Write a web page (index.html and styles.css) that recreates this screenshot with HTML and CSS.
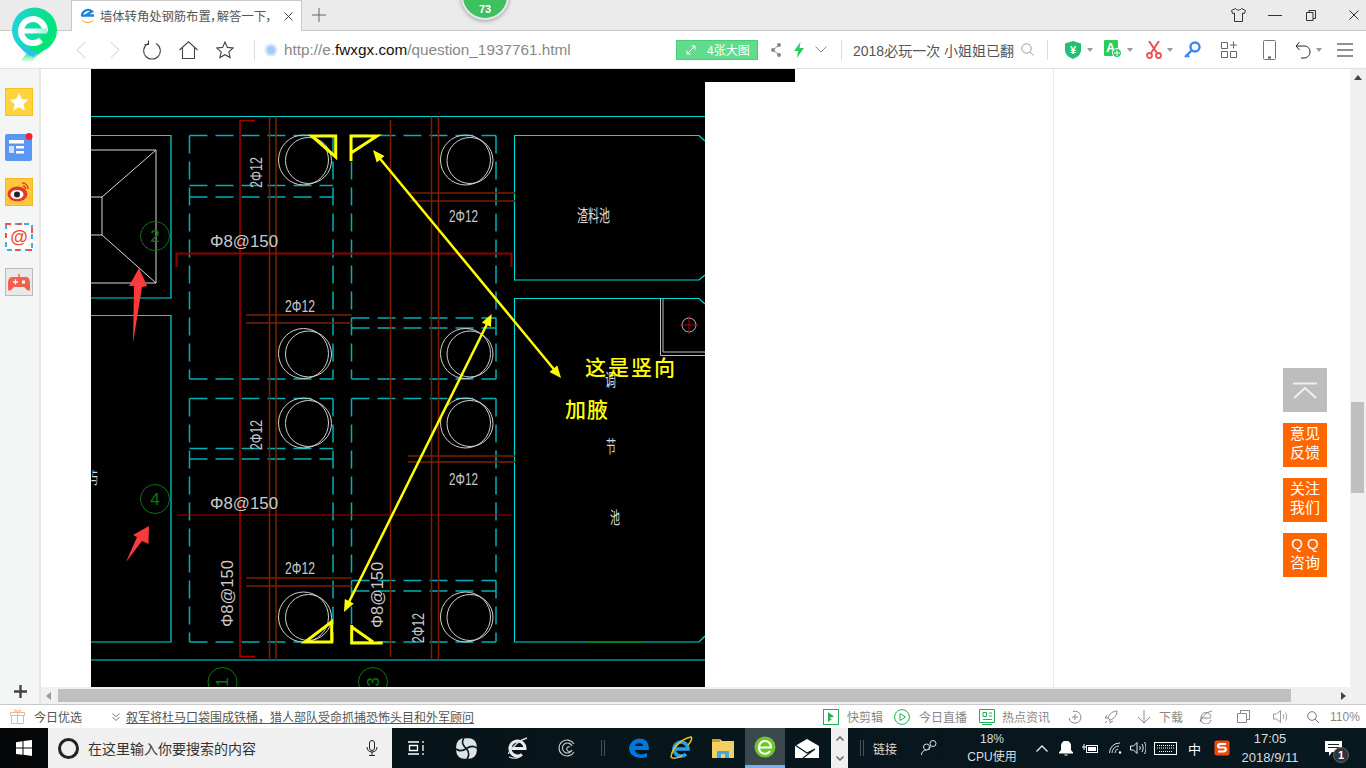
FILE: index.html
```html
<!DOCTYPE html>
<html lang="zh">
<head>
<meta charset="utf-8">
<title>墙体转角处钢筋布置，解答一下</title>
<link rel="stylesheet" href="styles.css">
</head>
<body>
<div class="screen">
  <header class="tabbar">
    <div class="tab">
      <svg width="16" height="16" viewBox="0 0 16 16"><path d="M2 8a6 6 0 0 1 10-4.500L5 7.500h9" fill="none" stroke="#1c86d8" stroke-width="2.400"/><path d="M1 10c3 5 9 5 13 1-2 5-11 6-13-1z" fill="#f0a020"/></svg>
      <span class="tab-title">墙体转角处钢筋布置，解答一下，</span>
      <svg class="ml-9" width="9" height="9" viewBox="0 0 9 9"><path d="M0.500 0.500l8 8M8.500 0.500l-8 8" stroke="#444" fill="none"/></svg>
    </div>
    <svg class="ml-10" width="14" height="14" viewBox="0 0 14 14"><path d="M7 0v14M0 7h14" stroke="#666" fill="none"/></svg>
    <div class="winctl">
      <svg width="15" height="14" viewBox="0 0 15 14"><path d="M4.500 .5L.5 2.500l1 3 2-.5v8.500h8V5l2 .5 1-3-4-2c-1 2-5 2-6 0z" fill="none" stroke="#333"/></svg>
      <svg class="ml-22" width="14" height="14" viewBox="0 0 14 14"><path d="M0 7.500h14" stroke="#333" fill="none"/></svg>
      <svg class="ml-24" width="10" height="11" viewBox="0 0 10 11"><path d="M.5 2.500h6.500v8H.5zM3 2.500V.5h6.500v8H7" stroke="#333" fill="none"/></svg>
      <svg class="ml-33" width="10" height="10" viewBox="0 0 10 10"><path d="M.5 .5l9 9M9.500 .5l-9 9" stroke="#333" fill="none"/></svg>
    </div>
  </header>

  <nav class="toolbar">
    <svg width="10" height="18" viewBox="0 0 10 18"><path d="M9.500 1L1 9l8.500 8" stroke="#ccc" fill="none"/></svg>
    <svg class="ml-24" width="10" height="18" viewBox="0 0 10 18"><path d="M.5 1L9 9l-8.500 8" stroke="#ccc" fill="none"/></svg>
    <svg class="ml-23" width="18" height="20" viewBox="0 0 18 20"><path d="M5 3.500a8.300 8.300 0 1 0 8 0M5.500 .5v4h-4" stroke="#444" stroke-width="1.100" fill="none"/></svg>
    <svg class="ml-18" width="19" height="18" viewBox="0 0 19 18"><path d="M.5 9L9.500 .8 18.500 9M3.500 7v10.500h12V7" stroke="#444" stroke-width="1.100" fill="none"/></svg>
    <svg class="ml-18" width="18" height="18" viewBox="0 0 18 18"><path d="M9 1l2.400 5.400 5.800.6-4.400 3.900 1.300 5.700L9 13.700l-5.100 2.900 1.300-5.700L.8 7l5.800-.6z" stroke="#444" stroke-width="1.100" fill="none"/></svg>
    <i class="sep ml-20"></i>
    <svg class="ml-9" width="14" height="14" viewBox="0 0 14 14"><circle cx="7" cy="7" r="6.500" fill="#d5e5fb"/><circle cx="7" cy="7" r="4" fill="#a8c8f8"/></svg>
    <div class="url ml-6">http://e.<b>fwxgx.com</b>/question_1937761.html</div>
    <div class="bigimg">
      <svg width="10" height="10" viewBox="0 0 10 10"><path d="M1 9l8-8M5.500 1H9v3.500M1 5.500V9h3.500" stroke="#fff" fill="none"/></svg>
      <span>4张大图</span>
    </div>
    <svg class="ml-13" width="10" height="14" viewBox="0 0 10 14"><path d="M8 2L2 7l6 5" stroke="#888" fill="none"/><circle cx="8" cy="2" r="2" fill="#888"/><circle cx="2" cy="7" r="2" fill="#888"/><circle cx="8" cy="12" r="2" fill="#888"/></svg>
    <svg class="ml-13" width="10" height="16" viewBox="0 0 10 16"><path d="M6.500 0L0 9h4l-1 7 7-10H5.500z" fill="#2ecc60"/></svg>
    <svg class="ml-11" width="12" height="7" viewBox="0 0 12 7"><path d="M.5 .5L6 6l5.500-5.500" stroke="#888" fill="none"/></svg>
    <i class="sep ml-14"></i>
    <div class="newsbox ml-11">2018必玩一次 小姐姐已翻</div>
    <svg class="ml-5" width="13" height="13" viewBox="0 0 13 13"><circle cx="5.500" cy="5.500" r="4.700" stroke="#999" fill="none"/><path d="M9 9l3.500 3.500" stroke="#999" fill="none"/></svg>
    <i class="sep ml-13"></i>
    <svg class="ml-17" width="16" height="18" viewBox="0 0 16 18"><path d="M8 0l8 2.500V9c0 4.500-4 7.500-8 9-4-1.500-8-4.500-8-9V2.500z" fill="#22c070"/><text x="8" y="12.500" class="ico-yen">¥</text></svg>
    <i class="caret ml-6"></i>
    <svg class="ml-11" width="18" height="19" viewBox="0 0 18 19"><rect width="14" height="16" rx="1" fill="#2ecc60"/><text x="6.500" y="12" class="ico-a">A</text><circle cx="13" cy="13" r="4.500" fill="#2ecc60" stroke="#fff"/><path d="M13 10v6M10 13h6" stroke="#fff" fill="none"/></svg>
    <i class="caret ml-5"></i>
    <svg class="ml-13" width="16" height="18" viewBox="0 0 16 18"><path d="M3 0l8 12M13 0L5 12" stroke="#f05050" stroke-width="2" fill="none"/><circle cx="3.500" cy="14.500" r="2.500" stroke="#f05050" stroke-width="1.800" fill="none"/><circle cx="12.500" cy="14.500" r="2.500" stroke="#f05050" stroke-width="1.800" fill="none"/></svg>
    <i class="caret ml-5"></i>
    <svg class="ml-11" width="17" height="17" viewBox="0 0 17 17"><circle cx="11" cy="6" r="4.500" stroke="#3d85f0" stroke-width="2.400" fill="none"/><path d="M7.500 9.500L1 16M3 14l2 2" stroke="#3d85f0" stroke-width="2.400" fill="none"/></svg>
    <svg class="ml-20" width="16" height="17" viewBox="0 0 16 17"><path d="M.5 1.500h6v6h-6zM.5 10.500h6v6h-6zM9.500 10.500h6v6h-6zM12.500 .5v7M9 4h7" stroke="#666" fill="none"/></svg>
    <svg class="ml-26" width="13" height="20" viewBox="0 0 13 20"><rect x=".5" y=".5" width="12" height="19" rx="1" stroke="#777" fill="none"/><rect x="5" y="16.500" width="3" height="2" fill="#555"/></svg>
    <svg class="ml-19" width="16" height="18" viewBox="0 0 16 18"><path d="M4.500 1L1 5l3.500 4M1 5h8c4 0 6 2.500 6 6s-3 6-6 6H6" stroke="#222" fill="none"/></svg>
    <i class="caret ml-5"></i>
    <svg class="ml-15" width="16" height="14" viewBox="0 0 16 14"><path d="M0 1h16M0 7h16M0 13h16" stroke="#222" stroke-width="1.200" fill="none"/></svg>
  </nav>

  <div class="middle">
    <aside class="sidebar">
      <ul class="side-list">
        <li><svg width="28" height="28" viewBox="0 0 28 28"><rect x=".5" y=".5" width="27" height="27" fill="#ffd43c" stroke="#f5c020"/><path d="M14 5l2.800 6 6.500.7-4.800 4.400 1.300 6.400-5.800-3.200-5.800 3.200 1.300-6.400-4.800-4.400 6.500-.7z" fill="#fff"/></svg></li>
        <li><svg width="28" height="28" viewBox="0 0 28 28"><rect y="1" width="27" height="27" rx="2" fill="#5a96f4"/><rect x="4" y="7" width="15" height="3.500" fill="#fff"/><rect x="4" y="13" width="5" height="7" fill="#cfe0fb"/><rect x="11" y="13" width="8" height="2.500" fill="#fff"/><rect x="11" y="18" width="8" height="2.500" fill="#fff"/><circle cx="24" cy="3.500" r="3.500" fill="#f8222a"/></svg></li>
        <li><svg width="28" height="28" viewBox="0 0 28 28"><rect x=".5" y=".5" width="27" height="27" fill="#ffc83c" stroke="#f5b820"/><ellipse cx="12.500" cy="16" rx="10" ry="7.500" fill="#e8382c"/><ellipse cx="12" cy="16.500" rx="6.500" ry="4.500" fill="#fff"/><circle cx="12" cy="16.500" r="3" fill="#222"/><path d="M17 5c4 0 6 3 6 6M18 8c2 0 2.500 1.500 2.500 3" stroke="#e8382c" stroke-width="1.500" fill="none"/></svg></li>
        <li><svg width="28" height="28" viewBox="0 0 28 28"><rect x="1" y="1" width="26" height="26" fill="#fff" stroke="#4aa8f0" stroke-width="2" stroke-dasharray="5 4"/><path d="M1 1h5M12 1h5M1 10v5M27 5v5M22 27h5M10 27h5" stroke="#f0503c" stroke-width="2" fill="none"/><text x="14" y="20" class="ico-at">@</text></svg></li>
        <li><svg width="28" height="28" viewBox="0 0 28 28"><rect x=".5" y=".5" width="27" height="27" fill="#e8e8e8" stroke="#bbb"/><path d="M7 9h14c3 0 4 3 4 7v5c0 2-2 2-3 1l-3-3H9l-3 3c-1 1-3 1-3-1v-5c0-4 1-7 4-7z" fill="#f4604e"/><path d="M14 6v3" stroke="#f4604e" stroke-width="1.500"/><path d="M8 14h5M10.500 11.500v5" stroke="#fff" stroke-width="1.300"/><rect x="17" y="12.500" width="3" height="3" fill="#fff"/></svg></li>
      </ul>
      <svg class="side-plus" width="13" height="13" viewBox="0 0 13 13"><path d="M6.500 0v13M0 6.500h13" stroke="#444" stroke-width="2.400" fill="none"/></svg>
    </aside>

    <div class="viewport">
      <div class="view-row">
        <main class="page">
          <svg class="drawing" width="704" height="618" viewBox="91 69 704 618">
            <polygon class="bg" points="91,69 795,69 795,82 705,82 705,687 91,687"/>
            <!-- frame -->
            <path class="cy" d="M91 116.500H705M91 660H705"/>
            <path class="cy" d="M91 135.500H171V298H91M91 315.500H171V642H91"/>
            <path class="cy" d="M705 141L699 135.500H514.500V280H699L705 275"/>
            <path class="cy" d="M705 304L699 298.500H514.500V642H699L705 636"/>
            <path class="gn-l" d="M587 642H644"/>
            <!-- white pit -->
            <path class="wh" d="M91 150H156V283H91M91 197H102V235H91M102 197L156 150M102 235L156 283"/>
            <path class="wh2" d="M660.500 298.500V355.500H705M663 298.500V352H705"/>
            <circle class="wh2" cx="689" cy="325" r="7"/>
            <path class="rd" d="M680 325H698M689 316V334"/>
            <!-- dashed stirrups -->
            <path class="dash" d="M189.500 135.500H333M189.500 135.500V379M333 135.500V379M189.500 185.500H333M189.500 197H333M189.500 379H333"/>
            <path class="dash" d="M351.500 135.500H496M351.500 135.500V379M496 135.500V379M351.500 318H496M351.500 328H496M351.500 379H496"/>
            <path class="dash" d="M189.500 398.500H333M189.500 398.500V642M333 398.500V642M189.500 448.500H333M189.500 459H333M189.500 642H333"/>
            <path class="dash" d="M351.500 398.500H496M351.500 398.500V642M496 398.500V642M351.500 580.500H496M351.500 591H496M351.500 642H496"/>
            <!-- rebar -->
            <path class="rd" d="M177 515H511"/>
            <path class="rd-m" d="M255 120.500H240V656.500H255"/>
            <path class="rd-b" d="M176.500 267V253.500H511.500V267"/>
            <path class="br" d="M269.500 116.500V660M276 116.500V660M390.500 120V657M431.500 116.500V660M438.500 116.500V660"/>
            <path class="br" d="M246 315H352M246 323H352M410 193H515M410 201H515M408 456H515M408 462H515M246 578H352M246 586H352"/>
            <!-- piles -->
            <g class="pile">
              <circle cx="303.500" cy="160" r="25"/><circle cx="308.500" cy="160.500" r="23"/>
              <circle cx="465.500" cy="160" r="25"/><circle cx="470" cy="160.500" r="23"/>
              <circle cx="303.500" cy="353.500" r="25"/><circle cx="308.500" cy="354" r="23"/>
              <circle cx="465.500" cy="353.500" r="25"/><circle cx="470" cy="354" r="23"/>
              <circle cx="303.500" cy="423" r="25"/><circle cx="308.500" cy="423.500" r="23"/>
              <circle cx="465.500" cy="423" r="25"/><circle cx="470" cy="423.500" r="23"/>
              <circle cx="303.500" cy="617" r="25"/><circle cx="308.500" cy="617.500" r="23"/>
              <circle cx="465.500" cy="617" r="25"/><circle cx="470" cy="617.500" r="23"/>
            </g>
            <!-- axis bubbles -->
            <g class="axis">
              <circle cx="155" cy="236" r="14.500"/><circle cx="155" cy="499" r="14.500"/>
              <circle cx="222.500" cy="682" r="14.500"/><circle cx="373" cy="682" r="14.500"/>
            </g>
            <text class="axis-t" x="155" y="242">2</text>
            <text class="axis-t" x="155" y="505">4</text>
            <text class="axis-t" transform="translate(228 682) rotate(-90)">1</text>
            <text class="axis-t" transform="translate(379 682) rotate(-90)">3</text>
            <!-- labels -->
            <text class="cad" x="210" y="247" textLength="68" lengthAdjust="spacingAndGlyphs">Φ8@150</text>
            <text class="cad" x="210" y="509" textLength="68" lengthAdjust="spacingAndGlyphs">Φ8@150</text>
            <text class="cad" x="285" y="312" textLength="30" lengthAdjust="spacingAndGlyphs">2Φ12</text>
            <text class="cad" x="449" y="222" textLength="29" lengthAdjust="spacingAndGlyphs">2Φ12</text>
            <text class="cad" x="449" y="485" textLength="29" lengthAdjust="spacingAndGlyphs">2Φ12</text>
            <text class="cad" x="285" y="574" textLength="30" lengthAdjust="spacingAndGlyphs">2Φ12</text>
            <text class="cad" transform="translate(262 188) rotate(-90)" textLength="31" lengthAdjust="spacingAndGlyphs">2Φ12</text>
            <text class="cad" transform="translate(262 450) rotate(-90)" textLength="30" lengthAdjust="spacingAndGlyphs">2Φ12</text>
            <text class="cad" transform="translate(424 643) rotate(-90)" textLength="30" lengthAdjust="spacingAndGlyphs">2Φ12</text>
            <text class="cad" transform="translate(233 627) rotate(-90)" textLength="67" lengthAdjust="spacingAndGlyphs">Φ8@150</text>
            <text class="cad" transform="translate(383 628) rotate(-90)" textLength="66" lengthAdjust="spacingAndGlyphs">Φ8@150</text>
            <text class="cad-cn" x="577" y="222" textLength="33" lengthAdjust="spacingAndGlyphs">渣料池</text>
            <text class="cad-cn" x="605" y="386" textLength="11" lengthAdjust="spacingAndGlyphs">调</text>
            <text class="cad-cn" x="606" y="453" textLength="10" lengthAdjust="spacingAndGlyphs">节</text>
            <text class="cad-cn" x="610" y="524" textLength="10" lengthAdjust="spacingAndGlyphs">池</text>
            <text class="cad-cn" x="91" y="484" textLength="7" lengthAdjust="spacingAndGlyphs">与</text>
            <!-- red annotation arrows -->
            <polygon class="r-arrow" points="139,268 147,286 142,287 133,343 134,286 129,286"/>
            <polygon class="r-arrow" points="149,526 148.500,544 142,541 126,562 137,537 133,535"/>
            <!-- yellow annotation -->
            <path class="yl" d="M311.700 136H335.700V157ZM351 161V136H377L351 153M305 642H331.700V621.700ZM351.700 625V643H382.700M351.700 627L373 642"/>
            <path class="yl-t" d="M377 155L557 373M489 320L347 606"/>
            <polygon class="yl-f" points="373,150 384.500,156.100 376.700,162.500"/>
            <polygon class="yl-f" points="561,378 557.300,365.500 549.500,371.900"/>
            <polygon class="yl-f" points="491.700,314 490.900,327 481.900,322.600"/>
            <polygon class="yl-f" points="344,612 353.800,603.400 344.800,599"/>
            <text class="note" x="585" y="375" textLength="90">这是竖向</text>
            <text class="note" x="565" y="417" textLength="43">加腋</text>
          </svg>
          <div class="page-right"></div>
          <div class="floats">
            <a class="float float-top"><svg width="24" height="17" viewBox="0 0 24 17"><path d="M0 1.500h24M1 16L12 6l11 10" stroke="#f0f0f0" stroke-width="2" fill="none"/></svg></a>
            <a class="float">意见<br>反馈</a>
            <a class="float">关注<br>我们</a>
            <a class="float">Q Q<br>咨询</a>
          </div>
        </main>
        <div class="vscroll">
          <i class="arrow-up"></i>
          <div class="vthumb"></div>
        </div>
      </div>
      <div class="hscroll">
        <i class="arrow-left"></i>
        <div class="hthumb"></div>
        <i class="arrow-right"></i>
      </div>
    </div>
  </div>

  <footer class="statusbar">
    <svg class="ml-10" width="15" height="15" viewBox="0 0 15 15"><path d="M.5 3.500h14v3H.5zM1.500 6.500h12v8h-12zM7.500 3.500v11M7.500 3.500C5 3.500 3 1 5 .8 6.500.6 7.500 3.500 7.500 3.500s1-2.900 2.500-2.700c2 .2 0 2.700-2.500 2.700" stroke="#f8b090" fill="none"/></svg>
    <span class="st st-d ml-9 w48">今日优选</span>
    <svg class="ml-30" width="8" height="8" viewBox="0 0 8 8"><path d="M.5 .5L4 3.500 7.500 .5M.5 4L4 7.500 7.500 4" stroke="#777" fill="none"/></svg>
    <a class="st-link ml-6">叙军将杜马口袋围成铁桶，猎人部队受命抓捕恐怖头目和外军顾问</a>
    <svg class="ml-349" width="16" height="16" viewBox="0 0 16 16"><rect x=".5" y=".5" width="15" height="15" stroke="#20b050" fill="none"/><path d="M5 3l6 4.500L6 9l3 1-4 3z" fill="#20b050"/></svg>
    <span class="st ml-8">快剪辑</span>
    <svg class="ml-11" width="16" height="16" viewBox="0 0 16 16"><circle cx="8" cy="8" r="7.400" stroke="#20b050" fill="none"/><path d="M6 4.500l5.500 3.500L6 11.500z" stroke="#20b050" fill="none"/></svg>
    <span class="st ml-9">今日直播</span>
    <svg class="ml-12" width="16" height="16" viewBox="0 0 16 16"><path d="M.5 .5h15v13H.5zM3 15.500h10M4 3.500v4h3.500v-4zM10 4h3M10 7h3M4 10.500h9" stroke="#20b050" fill="none"/></svg>
    <span class="st ml-7">热点资讯</span>
    <svg class="ml-18" width="14" height="14" viewBox="0 0 14 14"><path d="M1 8A6 6 0 1 0 5 1.500M7 4v6M4 7h6" stroke="#888" fill="none"/></svg>
    <svg class="ml-22" width="14" height="14" viewBox="0 0 14 14"><path d="M13 1C9 1 5 4 4 8l2 2c4-1 7-5 7-9zM4 8L1 8l2-3M6 10v3l3-2M3 11l-2 2" stroke="#888" fill="none"/></svg>
    <svg class="ml-19" width="14" height="14" viewBox="0 0 14 14"><path d="M7 0v13M1 7l6 6 6-6" stroke="#888" fill="none"/></svg>
    <span class="st ml-8">下载</span>
    <svg class="ml-16" width="14" height="14" viewBox="0 0 14 14"><path d="M12 8H2M2 8a5 5 0 0 1 10-1M12 10a5 5 0 0 1-10-2M1 12C3 6 8 2 13 1" stroke="#888" fill="none"/></svg>
    <svg class="ml-24" width="13" height="13" viewBox="0 0 13 13"><path d="M.5 3.500h9v9h-9zM3.500 3.500v-3h9v9h-3" stroke="#888" fill="none"/></svg>
    <svg class="ml-23" width="15" height="13" viewBox="0 0 15 13"><path d="M.5 4h3l4-3.500v12l-4-3.500h-3zM10 4c1 1 1 4 0 5M12.500 2.500c1.500 2 1.500 6 0 8" stroke="#999" fill="none"/></svg>
    <svg class="ml-19" width="12" height="12" viewBox="0 0 12 12"><circle cx="5" cy="5" r="4.300" stroke="#777" fill="none"/><path d="M8 8l4 4" stroke="#777" fill="none"/></svg>
    <span class="st ml-11">110%</span>
  </footer>

  <div class="taskbar">
    <svg class="ml-16" width="16" height="16" viewBox="0 0 16 16"><path d="M0 2.200L6.500 1.300v6.300H0zM7.500 1.100L16 0v7.600H7.500zM0 8.500h6.500v6.300L0 13.900zM7.500 8.500H16V16l-8.500-1.200z" fill="#fff"/></svg>
    <div class="searchbox ml-16">
      <i class="cortana"></i>
      <span class="searchtext">在这里输入你要搜索的内容</span>
      <svg width="12" height="16" viewBox="0 0 12 16"><rect x="3.500" y=".5" width="5" height="10" rx="2.500" stroke="#222" fill="none"/><path d="M1 7c0 3 2 5 5 5s5-2 5-5M6 12v3.500M3 15.500h6" stroke="#222" fill="none"/></svg>
    </div>
    <svg class="ml-16" width="16" height="14" viewBox="0 0 16 14"><path d="M0 1h11M0 13h11M1.500 4.500h8v5h-8zM15 0v2M15 4v6M15 12v2" stroke="#fff" stroke-width="1.300" fill="none"/></svg>
    <svg class="ml-32" width="21" height="21" viewBox="0 0 21 21"><rect x=".2" y=".2" width="20.600" height="20.600" rx="8" fill="#dfe3e6"/><path d="M10.500 10.500C7 8 5 4 8 0M10.500 10.500C14 8 17 7 21 10M10.500 10.500C13 14 14 17 11 21M10.500 10.500C7 13 4 14 0 11" stroke="#0a1a20" stroke-width="1.600" fill="none"/></svg>
    <svg class="ml-31" width="20" height="23" viewBox="0 0 20 23"><path d="M2 11.500h15a7.500 7.500 0 1 0-3 6" stroke="#eee" stroke-width="3" fill="none"/><path d="M0 17C5 9 11 3 19 1M1 20c5 2 10 1 13-2" stroke="#ddd" stroke-width="1.300" fill="none"/></svg>
    <svg class="ml-30" width="18" height="18" viewBox="0 0 18 18"><path d="M16 5A8 8 0 1 0 16 13M14 7a5 5 0 1 0 0 4c-1 2-4 2-5 0s1-4 3-3" stroke="#ccc" stroke-width="1.100" fill="none"/></svg>
    <i class="tb-sep ml-25"></i>
    <svg class="ml-24" width="20" height="20" viewBox="0 0 20 20"><path d="M0 10C1 3 8-1 14 1c5 2 6 6 6 11H6c0 4 6 6 12 3v4c-9 3-18-1-18-9zM6 8h8c0-4-7-4-8 0z" fill="#0078d7"/></svg>
    <svg class="ml-20" width="24" height="24" viewBox="0 0 24 24"><path d="M5 13h14a7 7 0 1 0-2 5" stroke="#2aa0e8" stroke-width="3.500" fill="none"/><path d="M2 21C3 12 12 3 22 1c2 1-1 6-3 8M2 21c2 3 8 0 11-1" stroke="#f0c020" stroke-width="1.500" fill="none"/></svg>
    <svg class="ml-19" width="22" height="20" viewBox="0 0 22 20"><path d="M0 1h8l2 2h12v17H0z" fill="#f5d060"/><path d="M0 1h8v3H0z" fill="#c8a030"/><path d="M5 13h12v7H5z" fill="#3fa8e8"/><path d="M9 16h4v4H9z" fill="#f5d060"/></svg>
    <div class="active ml-11">
      <svg width="22" height="22" viewBox="0 0 22 22"><circle cx="11" cy="11" r="10.500" fill="#6cc82a"/><path d="M4 11.500h14M5 11a6 6 0 0 1 12 0M5 12a6 6 0 0 0 11 3" stroke="#fff" stroke-width="2.200" fill="none"/></svg>
    </div>
    <svg class="ml-10" width="24" height="19" viewBox="0 0 24 19"><path d="M0 7L12 0l12 7v12H0z" fill="#fff"/><path d="M0 6l12 8 8-4-12 9" stroke="#0a1a20" stroke-width="1.200" fill="none"/></svg>
    <div class="tb-scroll ml-12">
      <svg width="8" height="5" viewBox="0 0 8 5"><path d="M.5 4.500L4 1l3.500 3.500" stroke="#666" stroke-width="1.500" fill="none"/></svg>
      <svg width="8" height="5" viewBox="0 0 8 5"><path d="M.5 .5L4 4l3.500-3.500" stroke="#666" stroke-width="1.500" fill="none"/></svg>
    </div>
    <i class="tb-sep ml-12"></i>
    <span class="tb-text ml-9">链接</span>
    <svg class="ml-24" width="17" height="16" viewBox="0 0 17 16"><circle cx="5.500" cy="7" r="3" stroke="#ddd" fill="none"/><circle cx="12" cy="3.500" r="3" stroke="#ddd" fill="none"/><path d="M.5 15c0-3 2-5 5-5M8 10c0-2 1-3 2-3.500" stroke="#ddd" fill="none"/></svg>
    <div class="cpu ml-21">18%<br>CPU使用</div>
    <svg class="ml-11" width="12" height="7" viewBox="0 0 12 7"><path d="M.5 6.500L6 1l5.500 5.500" stroke="#eee" stroke-width="1.300" fill="none"/></svg>
    <svg class="ml-11" width="14" height="15" viewBox="0 0 14 15"><path d="M7 0c3 0 4.500 2 4.500 5v4l2.500 3H0l2.500-3V5C2.500 2 4 0 7 0zM5.500 14h3" stroke="#fff" fill="#fff"/></svg>
    <svg class="ml-9" width="16" height="11" viewBox="0 0 16 11"><rect x="4.500" y="2.500" width="11" height="7" stroke="#fff" fill="none"/><rect x="6" y="4" width="8" height="4" fill="#fff"/><path d="M0 4h4M2 1v6" stroke="#fff" fill="none"/></svg>
    <svg class="ml-11" width="13" height="12" viewBox="0 0 13 12"><path d="M.5 11A10 10 0 0 1 11 1M3 11A7 7 0 0 1 10 4M6 11a4 4 0 0 1 3-4" stroke="#ddd" fill="none"/><circle cx="11" cy="10.500" r="1.200" fill="#fff"/></svg>
    <svg class="ml-8" width="16" height="12" viewBox="0 0 16 12"><path d="M.5 4h3l3.500-3.500v11L3.500 8h-3zM9.500 4c1 1 1 3 0 4M12 2c1.500 2 1.500 6 0 8M14.500 0c2 3 2 9 0 12" stroke="#eee" fill="none"/></svg>
    <svg class="ml-8" width="23" height="13" viewBox="0 0 23 13"><rect x=".5" y=".5" width="22" height="12" stroke="#fff" fill="none"/><path d="M3 3.500h17M3 6h17M5 9.500h13" stroke="#fff" stroke-dasharray="1 1" fill="none"/></svg>
    <span class="tb-zh ml-11">中</span>
    <svg class="ml-13" width="16" height="16" viewBox="0 0 16 16"><rect x=".5" y=".5" width="15" height="15" rx="2" fill="#ee4a14"/><path d="M12 4H6C3.500 4 3.500 7.500 6 7.500h4c2.500 0 2.500 4-.5 4H4" stroke="#fff" stroke-width="2.200" fill="none"/></svg>
    <div class="clock">17:05<br>2018/9/11</div>
    <div class="notify">
      <svg width="17" height="15" viewBox="0 0 17 15"><path d="M0 0h17v11H7l-3 4v-4H0z" fill="#fff"/><path d="M3 3.500h11M3 6.500h11" stroke="#222" fill="none"/></svg>
      <span class="badge-1">1</span>
    </div>
  </div>

  <svg class="logo" width="48" height="58" viewBox="0 0 48 58">
    <defs>
      <linearGradient id="lg" x1="0" y1="0" x2="1" y2="0"><stop offset="0" stop-color="#20d4dc"/><stop offset=".55" stop-color="#10dca0"/><stop offset="1" stop-color="#00e676"/></linearGradient>
      <linearGradient id="lt" x1="0" y1="0" x2="0" y2="1"><stop offset="0" stop-color="#00e676"/><stop offset=".55" stop-color="#00e676"/><stop offset="1" stop-color="#00e676" stop-opacity="0"/></linearGradient>
      <linearGradient id="lb" x1="0" y1="0" x2="1" y2="0"><stop offset="0" stop-color="#fff"/><stop offset=".3" stop-color="#fff"/><stop offset="1" stop-color="#9ef0d8"/></linearGradient>
    </defs>
    <path d="M44.500 28C41 39 25 46 19 56L9 54C13 47 19 42 24 38Z" fill="url(#lt)"/>
    <circle cx="22.500" cy="23" r="22.500" fill="url(#lg)"/>
    <path d="M44.500 28C42 36 33 41 26 47L16 45 30 30Z" fill="#00e676"/>
    <path d="M8 40L26 45.500 21 50C15 48 11 44 8 40Z" fill="#2cc0f0"/>
    <path d="M33 24.500A12 12 0 1 0 29 33" stroke="#fff" stroke-width="6" fill="none"/>
    <rect x="10" y="21.500" width="25" height="5" fill="url(#lb)"/>
  </svg>

  <div class="badge73"><span>73</span></div>
</div>
</body>
</html>
```

FILE: styles.css
```css
* { box-sizing: border-box; }
html, body { margin: 0; padding: 0; }
body { font-family: "Liberation Sans", "Noto Sans CJK SC", sans-serif; background: #fff; overflow: hidden; }
svg { display: block; flex: none; }
i { display: block; flex: none; }
a { text-decoration: none; }

.screen { position: relative; width: 1366px; height: 768px; overflow: hidden; display: flex; flex-direction: column; }

/* spacing helpers */
.ml-5 { margin-left: 5px; } .ml-6 { margin-left: 6px; } .ml-7 { margin-left: 7px; } .ml-8 { margin-left: 8px; }
.ml-9 { margin-left: 9px; } .ml-10 { margin-left: 10px; } .ml-11 { margin-left: 11px; } .ml-12 { margin-left: 12px; }
.ml-13 { margin-left: 13px; } .ml-14 { margin-left: 14px; } .ml-15 { margin-left: 15px; } .ml-16 { margin-left: 16px; }
.ml-17 { margin-left: 17px; } .ml-18 { margin-left: 18px; } .ml-19 { margin-left: 19px; } .ml-20 { margin-left: 20px; }
.ml-21 { margin-left: 21px; } .ml-22 { margin-left: 22px; } .ml-23 { margin-left: 23px; } .ml-24 { margin-left: 24px; }
.ml-25 { margin-left: 25px; } .ml-26 { margin-left: 26px; } .ml-30 { margin-left: 30px; } .ml-31 { margin-left: 31px; }
.ml-32 { margin-left: 32px; } .ml-33 { margin-left: 33px; } .ml-349 { margin-left: 349px; }

/* tab strip */
.tabbar { flex: none; height: 31px; display: flex; align-items: center; padding-left: 71px; background: #ebebeb; border-bottom: 1px solid #c8c8c8; }
.tab { width: 231px; height: 31px; align-self: flex-start; display: flex; align-items: center; padding: 0 8px; background: #fff; border: 1px solid #c8c8c8; border-bottom: 0; }
.tab-title { width: 176px; margin-left: 4px; font-size: 12.300px; font-feature-settings: "palt"; color: #555; white-space: nowrap; overflow: hidden; }
.winctl { margin-left: auto; padding-right: 7px; display: flex; align-items: center; }

/* address bar */
.toolbar { flex: none; height: 38px; display: flex; align-items: center; padding-left: 76px; background: #fff; border-bottom: 1px solid #e2e2e2; }
.sep { width: 1px; height: 20px; background: #ddd; }
.url { width: 392px; font-size: 15.300px; color: #888; white-space: nowrap; }
.url b { font-weight: 400; color: #111; }
.bigimg { width: 82px; height: 20px; display: flex; align-items: center; padding-left: 9px; background: #5fdc8c; border: 1px solid #4ccb78; color: #fff; font-size: 12px; }
.bigimg span { margin-left: 11px; }
.newsbox { width: 163px; font-size: 14px; color: #555; white-space: nowrap; overflow: hidden; }
.caret { width: 0; height: 0; border: 3px solid transparent; border-top: 4px solid #999; border-bottom: 0; }
.ico-yen { font-size: 11px; font-weight: 700; fill: #fff; text-anchor: middle; }
.ico-a { font-size: 12px; font-weight: 700; fill: #fff; text-anchor: middle; }
.ico-at { font-size: 18px; font-weight: 700; fill: #f0503c; text-anchor: middle; }

/* middle */
.middle { flex: none; height: 635px; display: flex; }
.sidebar { flex: none; width: 41px; display: flex; flex-direction: column; background: #f4f6f5; border-right: 2px solid #e6e6e6; padding: 19px 0 6px 5px; }
.side-list { list-style: none; margin: 0; padding: 0; display: flex; flex-direction: column; gap: 17px; }
.side-plus { margin: auto 0 0 9px; }
.viewport { flex: 1; min-width: 0; display: flex; flex-direction: column; }
.view-row { flex: 1; min-height: 0; display: flex; }
.page { position: relative; flex: 1; display: flex; padding-left: 50px; background: #fff; }
.drawing { height: 618px; }
.page-right { margin-left: 258px; width: 1px; background: #e8e8e8; }
.vscroll { flex: none; width: 16px; background: #f0f0f0; padding-top: 6px; }
.arrow-up { width: 0; height: 0; margin-left: 4px; border: 4px solid transparent; border-bottom: 5px solid #444; border-top: 0; }
.vthumb { width: 13px; height: 91px; margin: 322px 0 0 1px; background: #bfbfbf; }
.hscroll { flex: none; height: 17px; display: flex; align-items: center; padding-left: 5px; background: #f0f0f0; }
.arrow-left { width: 0; height: 0; border: 4px solid transparent; border-right: 5px solid #999; border-left: 0; }
.hthumb { width: 1233px; height: 13px; margin-left: 7px; background: #bfbfbf; }
.arrow-right { width: 0; height: 0; margin-left: 50px; border: 4px solid transparent; border-left: 5px solid #444; border-right: 0; }

/* cad drawing */
.bg { fill: #000; }
.cy { fill: none; stroke: #00d8d8; stroke-width: 1.200; }
.gn-l { fill: none; stroke: #008800; stroke-width: 1.500; }
.wh { fill: none; stroke: #d8d8d8; stroke-width: 1; }
.wh2 { fill: none; stroke: #bdbdbd; stroke-width: 1; }
.rd { fill: none; stroke: #b00000; stroke-width: 1; }
.rd-m { fill: none; stroke: #a80000; stroke-width: 1.500; }
.rd-b { fill: none; stroke: #900000; stroke-width: 2; }
.br { fill: none; stroke: #7a2000; stroke-width: 1.500; }
.dash { fill: none; stroke: #00b0b4; stroke-width: 1.500; stroke-dasharray: 18 8; }
.pile circle { fill: none; stroke: #d0d0d0; stroke-width: 1; }
.axis circle { fill: none; stroke: #0a7a0a; stroke-width: 1; }
.axis-t { font-size: 17px; fill: #0a7a0a; text-anchor: middle; }
.cad { font-family: "Liberation Sans", sans-serif; font-size: 17px; fill: #c8c8c8; }
.cad-cn { font-family: "Noto Sans CJK SC", sans-serif; font-size: 17px; fill: #dcdcdc; }
.r-arrow { fill: #fb3b3b; }
.yl { fill: none; stroke: #ffff00; stroke-width: 3; }
.yl-t { fill: none; stroke: #ffff00; stroke-width: 2.500; }
.yl-f { fill: #ffff00; }
.note { font-family: "Noto Sans CJK SC", sans-serif; font-size: 21px; font-weight: 500; fill: #ffff00; }

/* floating */
.floats { position: absolute; left: 1242px; top: 299px; display: flex; flex-direction: column; gap: 11px; }
.float { width: 44px; height: 44px; display: flex; align-items: center; justify-content: center; text-align: center; padding-bottom: 5px; background: #ff6600; color: #fff; font-size: 15px; line-height: 19px; }
.float-top { background: #bdbdbd; padding-bottom: 0; }

/* status bar */
.statusbar { flex: none; height: 24px; display: flex; align-items: center; background: #fff; border-top: 1px solid #c8c8c8; }
.st { font-size: 12px; color: #888; white-space: nowrap; }
.st-d { color: #555; }
.w48 { width: 48px; }
.st-link { font-size: 12px; color: #555; text-decoration: underline; white-space: nowrap; }

/* taskbar */
.taskbar { flex: none; height: 40px; display: flex; align-items: center; background: linear-gradient(90deg, #050607 0, #07151a 30%, #07181e 100%); color: #eee; }
.searchbox { width: 344px; height: 40px; display: flex; align-items: center; padding: 0 14px 0 10px; background: #f0f0f0; }
.cortana { width: 21px; height: 21px; border-radius: 50%; border: 3px solid #222; }
.searchtext { flex: 1; margin-left: 9px; font-size: 14px; color: #333; }
.tb-sep { width: 4px; height: 16px; border-left: 1px solid #45525a; border-right: 1px solid #45525a; }
.active { width: 40px; height: 40px; display: flex; align-items: center; justify-content: center; background: #3a484e; border-bottom: 3px solid #78b0f0; }
.tb-scroll { width: 17px; height: 40px; display: flex; flex-direction: column; align-items: center; justify-content: space-around; background: #efefef; }
.tb-text { font-size: 12px; color: #ddd; }
.cpu { width: 66px; font-size: 12px; line-height: 18px; text-align: center; color: #ddd; }
.tb-zh { font-size: 13px; color: #fff; }
.clock { width: 80px; font-size: 13px; line-height: 19px; text-align: center; color: #ddd; }
.notify { position: relative; margin-left: 15px; }
.badge-1 { position: absolute; left: 8px; top: 6px; width: 16px; height: 16px; border-radius: 50%; background: #333; border: 1px solid #666; color: #fff; font-size: 11px; font-weight: 700; line-height: 14px; text-align: center; }

/* overlays */
.logo { position: absolute; left: 12px; top: 7px; }
.badge73 { position: absolute; left: 461px; top: -28px; width: 48px; height: 48px; border-radius: 50%; display: flex; align-items: flex-end; justify-content: center; background: #3cc060; border: 2px solid #e8e8e8; box-shadow: 0 1px 4px rgba(0,0,0,.35); color: #fff; font-size: 11px; font-weight: 700; padding-bottom: 3px; }
```
